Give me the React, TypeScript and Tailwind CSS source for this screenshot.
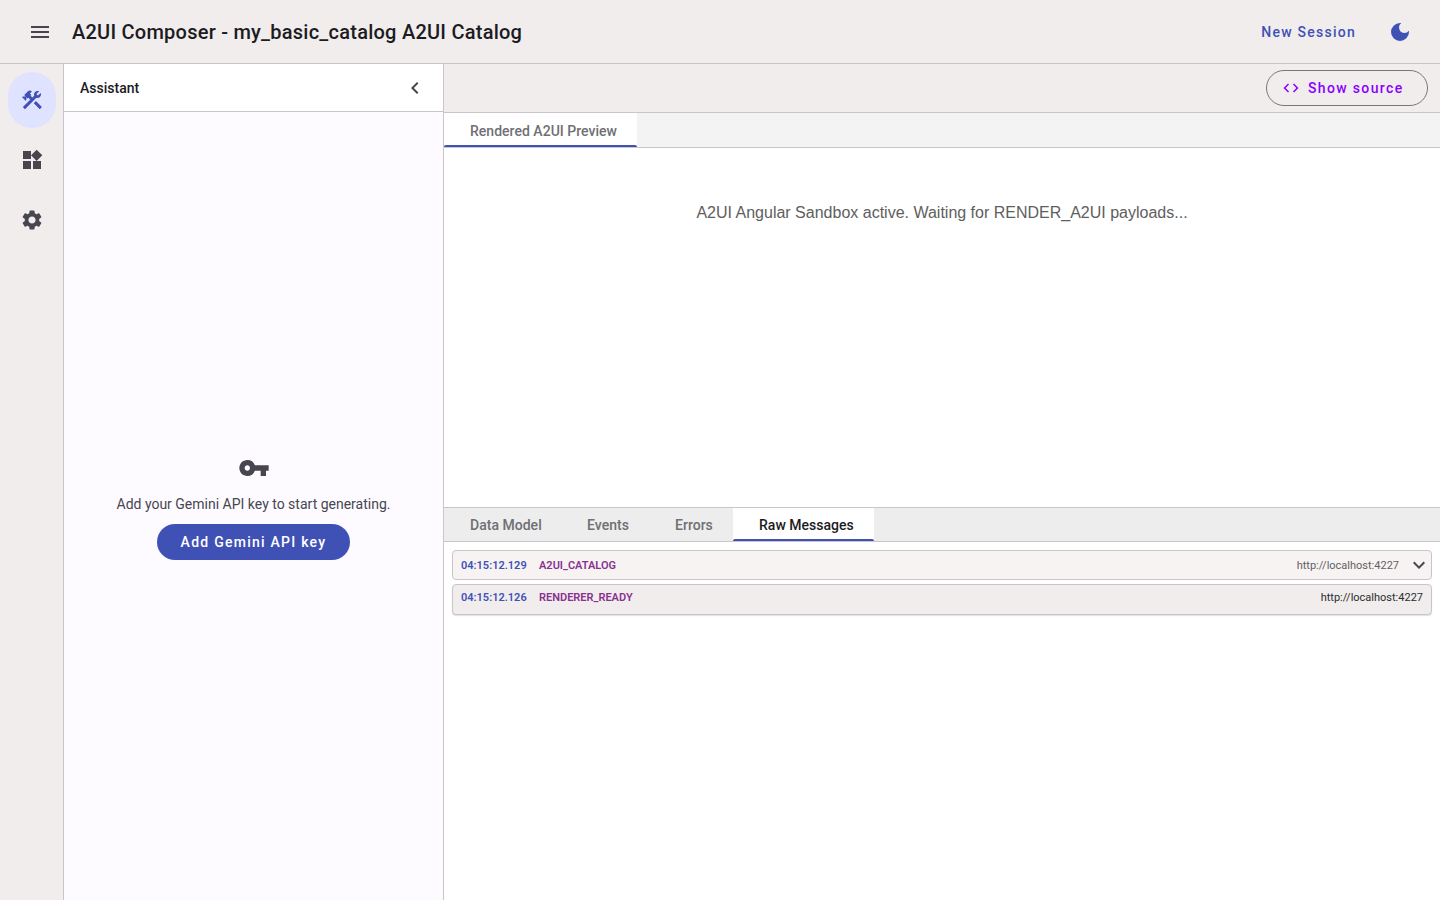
import { MdMenu, MdConstruction, MdWidgets, MdSettings, MdChevronLeft, MdVpnKey, MdDarkMode, MdCode, MdExpandMore } from "react-icons/md";

const rb = "font-['Roboto',sans-serif]";

function LogRow({ time, type, url, open }: { time: string; type: string; url: string; open?: boolean }) {
  return (
    <div className={`flex items-center rounded-[4px] border border-[#c9c5ca] pl-2 pr-2 text-[11px] ${open ? "h-[30px] bg-[#f7f3f2] pt-[2px]" : "h-[31px] bg-[#f0edec] pb-[2px] shadow-[0_1px_1px_rgba(0,0,0,0.12)]"}`}>
      <span className="w-[78px] font-semibold text-[#3f51b5]">{time}</span>
      <span className="font-semibold text-[#883191]">{type}</span>
      <span className={`ml-auto ${open ? "text-[#625f66]" : "text-[#2c2c30]"}`}>{url}</span>
      {open && <MdExpandMore className="ml-[8px] mr-[-8px] mt-[-3px] text-[#47464f]" size={24} />}
    </div>
  );
}

function Tab({ label, active, dark, w }: { label: string; active?: boolean; dark?: boolean; w: string }) {
  return (
    <div className={`relative flex h-full items-center text-sm font-medium tracking-[0.02px] ${w} ${active ? "bg-white" : ""}`}>
      <span className={dark ? "text-[#1c1b1f]" : "text-[#6f6f74]"}>{label}</span>
      {active && <div className="absolute bottom-0 left-0 right-0 h-[2px] rounded-t-[2px] bg-[#3f51b5]" />}
    </div>
  );
}

export default function App() {
  return (
    <div className={`flex h-[900px] w-[1440px] flex-col overflow-hidden bg-white ${rb}`}>
      <header className="flex h-[64px] shrink-0 items-center border-b border-[#c9c5ca] bg-[#f0edec] pl-[28px] pr-[28px]">
        <MdMenu size={24} className="text-[#47464f]" />
        <h1 className="ml-[20px] text-[20px] font-medium leading-none tracking-[0.24px] text-[#1c1b1f]">A2UI Composer - my_basic_catalog A2UI Catalog</h1>
        <span className="ml-auto text-sm font-medium tracking-[1.25px] text-[#3f51b5]">New Session</span>
        <MdDarkMode size={24} className="ml-[32px] text-[#3f51b5]" />
      </header>
      <div className="flex min-h-0 flex-1">
        <nav className="flex w-[64px] shrink-0 flex-col items-center border-r border-[#c9c5ca] bg-[#f0edec] pl-px pt-[8px]">
          <div className="flex h-[56px] w-[48px] items-center justify-center rounded-full bg-[#dfe3ff] text-[#3f51b5]">
            <MdConstruction size={24} />
          </div>
          <div className="mt-[4px] flex h-[56px] w-[48px] items-center justify-center text-[#47464f]">
            <MdWidgets size={24} />
          </div>
          <div className="mt-[4px] flex h-[56px] w-[48px] items-center justify-center text-[#47464f]">
            <MdSettings size={24} />
          </div>
        </nav>
        <aside className="flex w-[380px] shrink-0 flex-col border-r border-[#c9c5ca] bg-[#fdfbff]">
          <div className="flex h-[48px] shrink-0 items-center justify-between border-b border-[#c9c5ca] bg-white pl-[16px] pr-[16px]">
            <span className="text-sm font-medium text-[#1c1b1f]">Assistant</span>
            <MdChevronLeft size={24} className="text-[#47464f]" />
          </div>
          <div className="flex flex-1 flex-col items-center justify-center pb-[1px]">
            <MdVpnKey size={32} className="text-[#47464f]" />
            <p className="mt-[10px] text-sm text-[#47464f]">Add your Gemini API key to start generating.</p>
            <button className="mt-[10px] flex h-[36px] w-[193px] items-center justify-center rounded-full bg-[#3f51b5] text-sm font-medium tracking-[1.25px] text-white">Add Gemini API key</button>
          </div>
        </aside>
        <main className="flex min-w-0 flex-1 flex-col">
          <div className="flex h-[49px] shrink-0 items-center justify-end border-b border-[#c9c5ca] bg-[#f0edec] pr-[12px]">
            <button className="flex h-[36px] w-[162px] items-center justify-start gap-[8px] rounded-full border border-[#79747e] pl-[15px] text-sm font-medium tracking-[1.35px] text-[#8a00ff]">
              <MdCode size={18} className="text-[#8a00ff]" />
              Show source
            </button>
          </div>
          <div className="flex h-[35px] shrink-0 border-b border-[#c9c5ca] bg-[#f3f3f3]">
            <Tab label="Rendered A2UI Preview" active w="w-[193px] pl-[26px] pt-[2px]" />
          </div>
          <div className="flex h-[359px] shrink-0 justify-center pt-[53px] font-['Liberation_Sans',sans-serif] text-base text-[#5e5e5e]">
            A2UI Angular Sandbox active. Waiting for RENDER_A2UI payloads...
          </div>
          <div className="flex h-[35px] shrink-0 border-y border-[#c9c5ca] bg-[#ededed]">
            <Tab label="Data Model" w="w-[123px] pl-[26px]" />
            <Tab label="Events" w="w-[81px] pl-[20px]" />
            <Tab label="Errors" w="w-[85px] pl-[27px]" />
            <Tab label="Raw Messages" active dark w="w-[141px] pl-[26px]" />
          </div>
          <div className="flex flex-1 flex-col gap-[4px] bg-white px-[8px] pt-[8px]">
            <LogRow time="04:15:12.129" type="A2UI_CATALOG" url="http://localhost:4227" open />
            <LogRow time="04:15:12.126" type="RENDERER_READY" url="http://localhost:4227" />
          </div>
        </main>
      </div>
    </div>
  );
}
